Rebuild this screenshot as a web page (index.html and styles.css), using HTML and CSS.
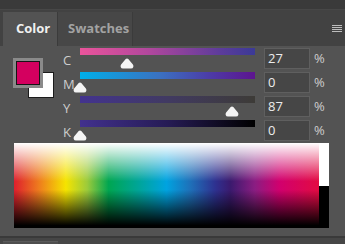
FILE: index.html
```html
<!DOCTYPE html>
<html lang="en">
  <head>
    <meta charset="UTF-8" />
    <title>Color</title>
    <link rel="stylesheet" href="styles.css">
  </head>
  <body>
    <div class="top-strip"></div>
    <div class="tabs">
      <div class="tab active">Color</div>
      <div class="tab inactive">Swatches</div>
      <div class="menu"><span></span><span></span><span></span><span></span></div>
    </div>
    <div class="panel">
      <div class="picker">
        <div class="swatches">
          <div class="fg"></div>
          <div class="bg"></div>
        </div>
        <div class="rows">
          <div class="row">
            <span class="label">C</span>
            <div class="track">
              <div class="bar bar-c"></div>
              <svg class="thumb" style="left:27%" viewBox="0 0 14 11"><path d="M7 0.4 Q7.7 0.4 8.3 1.1 L12.9 6.4 Q13.7 7.5 13.3 9 Q12.9 10.6 11 10.6 L3 10.6 Q1.1 10.6 0.7 9 Q0.3 7.5 1.1 6.4 L5.7 1.1 Q6.3 0.4 7 0.4 Z"/></svg>
            </div>
            <div class="value">27</div>
            <span class="pct">%</span>
          </div>
          <div class="row">
            <span class="label">M</span>
            <div class="track">
              <div class="bar bar-m"></div>
              <svg class="thumb" style="left:0%" viewBox="0 0 14 11"><path d="M7 0.4 Q7.7 0.4 8.3 1.1 L12.9 6.4 Q13.7 7.5 13.3 9 Q12.9 10.6 11 10.6 L3 10.6 Q1.1 10.6 0.7 9 Q0.3 7.5 1.1 6.4 L5.7 1.1 Q6.3 0.4 7 0.4 Z"/></svg>
            </div>
            <div class="value">0</div>
            <span class="pct">%</span>
          </div>
          <div class="row">
            <span class="label">Y</span>
            <div class="track">
              <div class="bar bar-y"></div>
              <svg class="thumb" style="left:87%" viewBox="0 0 14 11"><path d="M7 0.4 Q7.7 0.4 8.3 1.1 L12.9 6.4 Q13.7 7.5 13.3 9 Q12.9 10.6 11 10.6 L3 10.6 Q1.1 10.6 0.7 9 Q0.3 7.5 1.1 6.4 L5.7 1.1 Q6.3 0.4 7 0.4 Z"/></svg>
            </div>
            <div class="value">87</div>
            <span class="pct">%</span>
          </div>
          <div class="row last">
            <span class="label">K</span>
            <div class="track">
              <div class="bar bar-k"></div>
              <svg class="thumb" style="left:0%" viewBox="0 0 14 11"><path d="M7 0.4 Q7.7 0.4 8.3 1.1 L12.9 6.4 Q13.7 7.5 13.3 9 Q12.9 10.6 11 10.6 L3 10.6 Q1.1 10.6 0.7 9 Q0.3 7.5 1.1 6.4 L5.7 1.1 Q6.3 0.4 7 0.4 Z"/></svg>
            </div>
            <div class="value">0</div>
            <span class="pct">%</span>
          </div>
        </div>
      </div>
      <div class="spectrum">
        <div class="ramp"></div>
        <div class="bw">
          <div class="white"></div>
          <div class="black"></div>
        </div>
      </div>
    </div>
    <div class="footer">
      <div class="footer-tab"></div>
    </div>
  </body>
</html>
```

FILE: styles.css
```css
* {
  margin: 0;
  padding: 0;
  box-sizing: border-box;
}

body {
  width: 345px;
  height: 244px;
  overflow: hidden;
  background-color: #535353;
  font-family: "Open Sans", "Noto Sans", sans-serif;
}

.top-strip {
  height: 10px;
  background-color: #3a3a3a;
  border-bottom: 1px solid #474747;
}

.tabs {
  height: 36px;
  padding: 2px 0 0 3px;
  background-color: #424242;
  display: flex;
}

.tab {
  display: flex;
  align-items: center;
  font-size: 13px;
  font-weight: 700;
  padding-bottom: 3px;
}

.tab.active {
  width: 54px;
  padding-left: 13px;
  background-color: #535353;
  color: #f0f0f0;
}

.tab.inactive {
  width: 76px;
  padding-left: 10px;
  background-color: #474747;
  color: #a2a2a2;
  border-left: 1px solid #3b3b3b;
  border-right: 1px solid #3b3b3b;
}

.menu {
  margin-left: auto;
  margin-right: 3px;
  padding-top: 13px;
  display: flex;
  flex-direction: column;
  gap: 1px;
}

.menu span {
  display: block;
  width: 10px;
  height: 1px;
  background-color: #bdbdbd;
}

.panel {
  padding: 2px 0 8px 0;
}

.picker {
  display: flex;
}

.swatches {
  position: relative;
  width: 63px;
}

.fg {
  position: relative;
  z-index: 1;
  margin: 13px 0 0 16px;
  width: 24px;
  height: 24px;
  background-color: #d4005f;
  border: 1px solid #151515;
  box-shadow: 0 0 0 3px #8a8a8a;
}

.bg {
  position: absolute;
  left: 28px;
  top: 24px;
  width: 26px;
  height: 26px;
  background-color: #ffffff;
  border: 1px solid #1c1c1c;
}

.rows {
  display: flex;
  flex-direction: column;
}

.row {
  display: flex;
  height: 24px;
}

.row.last {
  height: 23px;
}

.label {
  width: 17px;
  padding-top: 6px;
  font-size: 13px;
  line-height: 13px;
  color: #cdcdcd;
}

.track {
  position: relative;
  width: 175px;
}

.bar {
  height: 7px;
}

.bar-c {
  background: linear-gradient(to right, #ea549b, #b0479d 40%, #5d3c9b 80%, #3b3a97);
}

.bar-m {
  background: linear-gradient(to right, #00afe9, #3a72c2 45%, #4d3aa6 75%, #5d148f);
}

.bar-y {
  background: linear-gradient(to right, #43338f, #413a62 50%, #3d3b37);
}

.bar-k {
  background: linear-gradient(to right, #42318e, #261c55 50%, #000000);
}

.thumb {
  position: absolute;
  top: 10px;
  width: 14px;
  height: 11px;
  transform: translateX(-50%);
  fill: #f4f4f4;
}

.value {
  margin-left: 9px;
  width: 46px;
  height: 21px;
  padding-left: 3px;
  background-color: #464646;
  border: 1px solid #5f5f5f;
  color: #ececec;
  font-size: 13px;
  line-height: 19px;
}

.pct {
  margin-left: 4px;
  font-size: 13px;
  line-height: 21px;
  color: #cdcdcd;
}

.spectrum {
  display: flex;
  margin-left: 14px;
  height: 85px;
}

.ramp {
  width: 305px;
  background:
    linear-gradient(to bottom, #ffffff 0%, rgba(255, 255, 255, 0) 45%, rgba(0, 0, 0, 0) 55%, #000000 97%),
    linear-gradient(to right, #de1f2d 0%, #ee7a1e 8%, #f5e400 17%, #9ccb3b 24%, #00a651 31%, #00a59a 41%, #00a3e0 50%, #1f6fb8 58%, #2e3190 66%, #3b1a6e 71%, #8b1d82 79%, #d1006e 87%, #e30b42 100%);
}

.bw {
  width: 10px;
  display: flex;
  flex-direction: column;
}

.white {
  height: 43px;
  background-color: #ffffff;
}

.black {
  flex: 1;
  background-color: #000000;
}

.footer {
  height: 8px;
  background-color: #464646;
  border-top: 2px solid #3a3a3a;
  padding: 3px 0 0 3px;
}

.footer-tab {
  width: 55px;
  height: 3px;
  background-color: #4e4e4e;
  border-top: 1px solid #5a5a5a;
}
```
